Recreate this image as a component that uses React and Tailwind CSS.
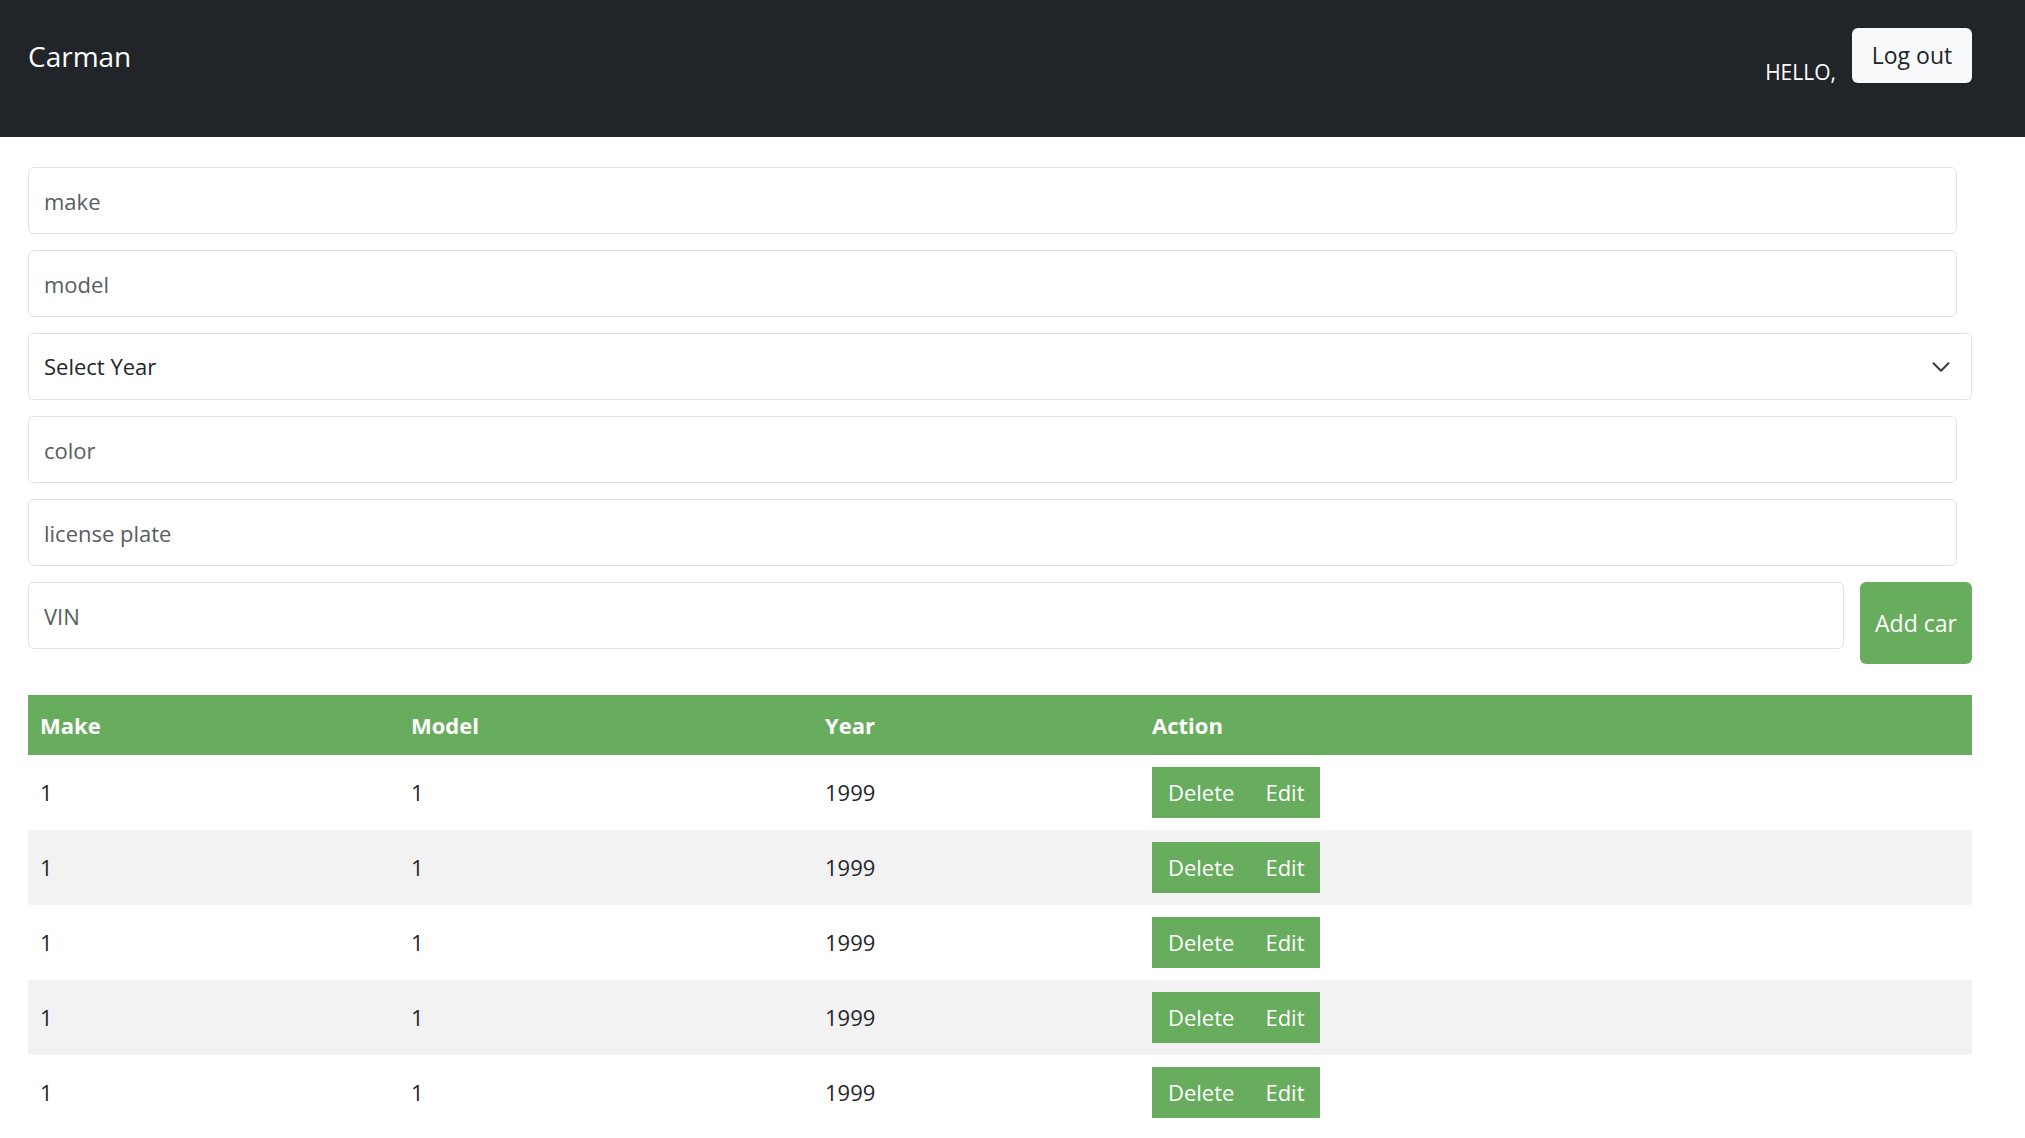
import React from 'react';

const cars = [
  { make: '1', model: '1', year: '1999' },
  { make: '1', model: '1', year: '1999' },
  { make: '1', model: '1', year: '1999' },
  { make: '1', model: '1', year: '1999' },
  { make: '1', model: '1', year: '1999' },
];

const inputClass =
  'h-[67px] rounded-[6px] border border-[#dee2e6] bg-white px-[15px] text-[22px] text-[#212529] placeholder:text-[#595c5f] outline-none';

const App = () => {
  return (
    <div className="min-h-screen bg-white font-['Open_Sans',sans-serif] text-[#212529]">
      <nav className="flex h-[137px] items-start justify-between bg-[#212529] pl-[28px] pr-[53px] pt-[28px]">
        <div className="flex h-[55px] items-center text-[28px] text-white">Carman</div>
        <div className="flex items-end gap-4">
          <span className="text-[21px] leading-none text-white">HELLO,</span>
          <button className="h-[55px] w-[120px] rounded-[6px] bg-[#f8f9fa] text-[23px] text-[#212529]">
            Log out
          </button>
        </div>
      </nav>

      <div className="px-[28px] pt-[30px]">
        <div className="flex flex-col gap-[16px]">
          <input className={`${inputClass} w-[1929px]`} placeholder="make" />
          <input className={`${inputClass} w-[1929px]`} placeholder="model" />
          <div className="relative w-[1944px]">
            <select className={`${inputClass} w-full appearance-none`}>
              <option>Select Year</option>
            </select>
            <svg
              className="pointer-events-none absolute right-[21px] top-1/2 h-[20px] w-[20px] -translate-y-1/2"
              viewBox="0 0 16 16"
              fill="none"
              stroke="#343a40"
              strokeWidth="1.6"
              strokeLinecap="round"
              strokeLinejoin="round"
            >
              <path d="M2 5l6 6 6-6" />
            </svg>
          </div>
          <input className={`${inputClass} w-[1929px]`} placeholder="color" />
          <input className={`${inputClass} w-[1929px]`} placeholder="license plate" />
          <div className="flex w-[1944px] items-start gap-[16px]">
            <input className={`${inputClass} flex-1`} placeholder="VIN" />
            <button className="h-[82px] w-[112px] rounded-[6px] bg-[#68ad5d] text-[23px] text-white">
              Add car
            </button>
          </div>
        </div>

        <table className="mt-[31px] w-[1944px] border-collapse text-left text-[22px]">
          <thead>
            <tr className="h-[60px] bg-[#68ad5d] text-white">
              <th className="w-[371px] px-[12px] font-bold">Make</th>
              <th className="w-[414px] px-[12px] font-bold">Model</th>
              <th className="w-[327px] px-[12px] font-bold">Year</th>
              <th className="px-[12px] font-bold">Action</th>
            </tr>
          </thead>
          <tbody>
            {cars.map((car, i) => (
              <tr key={i} className={`h-[75px] ${i % 2 === 1 ? 'bg-[#f2f2f2]' : 'bg-white'}`}>
                <td className="px-[12px]">{car.make}</td>
                <td className="px-[12px]">{car.model}</td>
                <td className="px-[12px]">{car.year}</td>
                <td className="px-[12px]">
                  <div className="flex">
                    <button className="h-[51px] bg-[#68ad5d] px-[16px] text-white">Delete</button>
                    <button className="h-[51px] bg-[#68ad5d] px-[15px] text-white">Edit</button>
                  </div>
                </td>
              </tr>
            ))}
          </tbody>
        </table>
      </div>
    </div>
  );
};

export default App;
